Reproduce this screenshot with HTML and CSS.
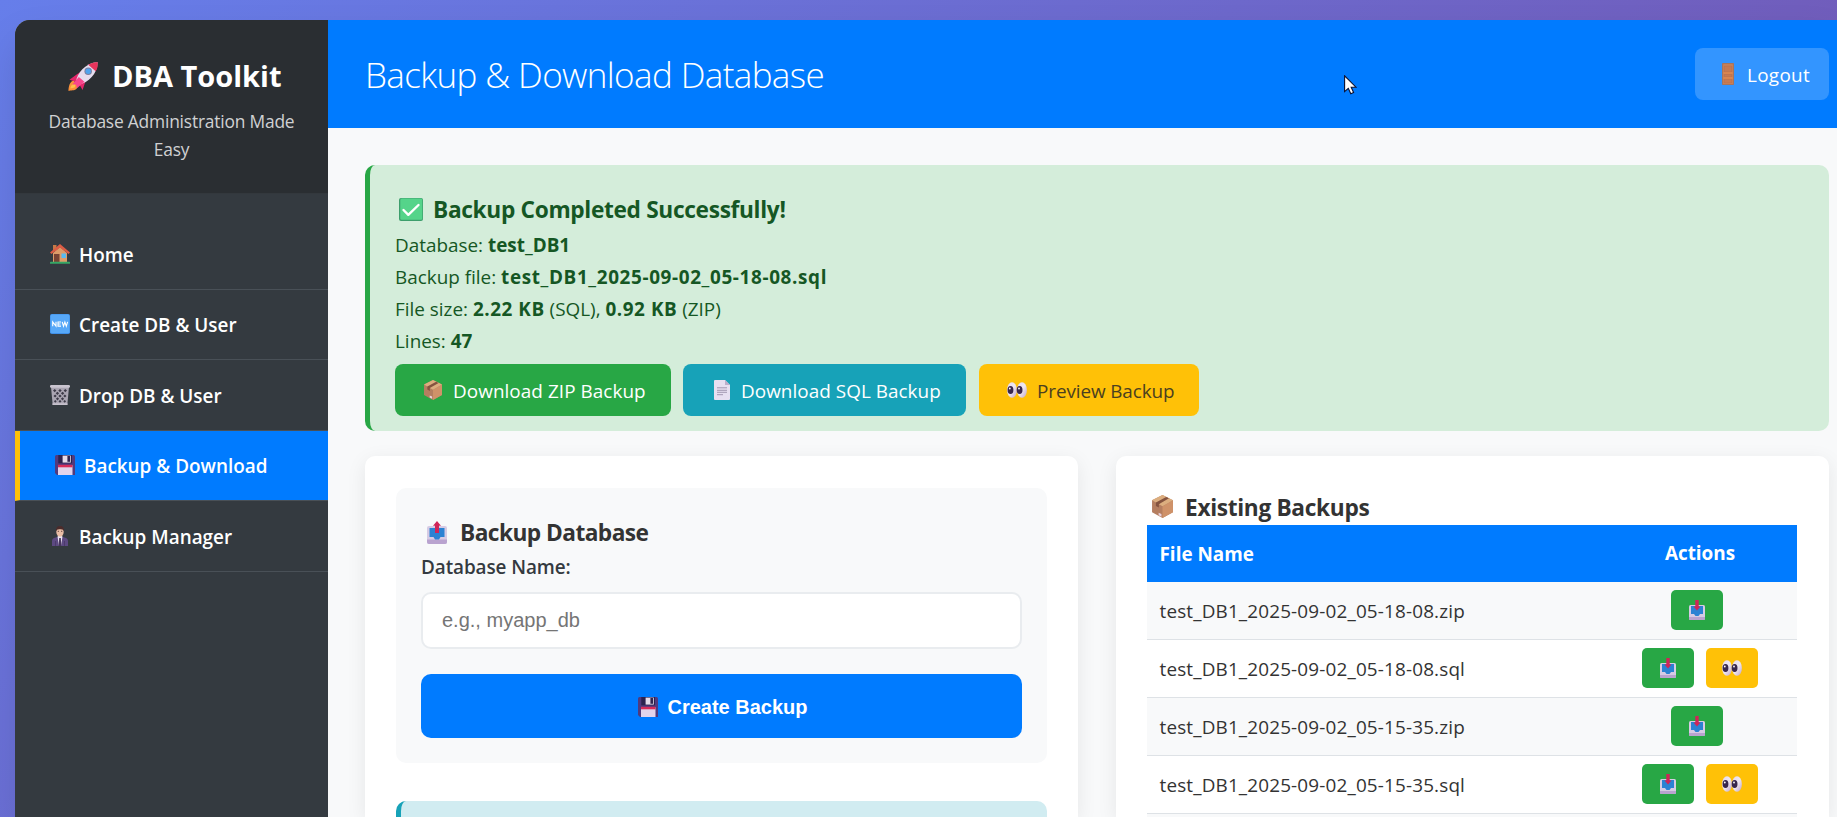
FILE: index.html
```html
<!DOCTYPE html>
<html lang="en">
<head>
<meta charset="utf-8">
<title>DBA Toolkit</title>
<link rel="stylesheet" href="styles.css">
</head>
<body>
<svg class="sprite" width="0" height="0" aria-hidden="true">
  <symbol id="rocket" viewBox="0 0 32 32">
    <path d="M5 21C8 22 11 25 9 29C7 32 2 31 0 32C0 28 1 22 5 21Z" fill="#f9913a"/>
    <path d="M2 29C3 25 5 24 7 25C8 28 6 29 2 29Z" fill="#fcc04a"/>
    <path d="M9 14L1 20L8 22L14 11ZM18 22L15 31L11 24L21 18Z" fill="#e3266a"/>
    <path d="M8 22C9 13 18 2 31 1C31 14 21 23 11 25Z" fill="#e5dcee"/>
    <path d="M21 4Q27 1 31 1Q32 6 29 11Z" fill="#e8345c"/>
    <path d="M11 17L4 25L8 25L9 29L17 22Z" fill="#f8458c"/>
    <circle cx="21" cy="11" r="4" fill="#7e7f9e"/><circle cx="21" cy="11" r="2.9" fill="#4fa3ee"/>
  </symbol>
  <symbol id="house" viewBox="0 0 20 20">
    <path d="M3 1H6.5V7H3Z" fill="#c87846"/><path d="M3 9L10 3L17 9V18H3Z" fill="#dd9c69"/>
    <path d="M4 10H9.5V18H4Z" fill="#794334"/><path d="M11.5 9.5H16V14H11.5Z" fill="#56baf2"/>
    <path d="M10 0L20 8.5L18.5 10L10 3.5L1.500 10L0 8.500Z" fill="#dc5c45"/>
    <rect y="17.800" width="20" height="2" rx=".6" fill="#36a765"/>
  </symbol>
  <symbol id="new" viewBox="0 0 20 20">
    <rect width="20" height="20" rx="1.800" fill="#3f8fe8"/><rect x=".6" y=".4" width="18.800" height="18.600" rx="1.500" fill="#57a8f8"/>
    <path d="M2.700 12.200V7.800L6 12.200V7.800M11 8H8V12.100H11M8 10H10.600M12.200 7.800L13.500 12.100L14.900 8L16.300 12.100L17.600 7.800" fill="none" stroke="#fff" stroke-width="1.100"/>
  </symbol>
  <symbol id="trash" viewBox="0 0 20 20">
    <path d="M1 2H19L17.300 20H2.700Z" fill="#aaa5b2"/>
    <path d="M3 5.500l1.700-1.500 1.700 1.500-1.700 1.700zM8.300 5.500L10 4l1.700 1.500L10 7.200zM13.600 5.500L15.300 4 17 5.500l-1.700 1.700zM5.700 8.200l1.700-1.500 1.700 1.500-1.700 1.700zM10.900 8.200l1.700-1.500 1.700 1.500-1.700 1.700zM3.500 11l1.600-1.500L6.700 11l-1.600 1.600zM8.300 11L10 9.500l1.700 1.500-1.700 1.600zM13.300 11l1.600-1.500 1.600 1.500-1.600 1.600zM5.900 13.800l1.600-1.500 1.600 1.500-1.600 1.600zM10.900 13.800l1.600-1.500 1.600 1.500-1.600 1.600zM3.900 16.300L5.300 15l1.400 1.300-1.400 1.500zM8.500 16.300L10 15l1.500 1.300-1.500 1.500zM13.300 16.300l1.400-1.300 1.400 1.300-1.400 1.500z" fill="#3e3b49"/>
    <rect y="0" width="20" height="2.800" rx="1.200" fill="#c9c4cf"/><rect x="2.500" y="18.300" width="15" height="1.700" fill="#c6c0cc"/>
  </symbol>
  <symbol id="floppy" viewBox="0 0 20 20">
    <path d="M1.500 0H18.500Q20 0 20 1.500V20H2L0 18V1.500Q0 0 1.500 0Z" fill="#513a7d"/>
    <path d="M3.300 0H17V8.300H3.300Z" fill="#2c224f"/><path d="M7.600 .6H15.800V7.600H7.600Z" fill="#e5dcea"/><path d="M12.400 1H15V6.800H12.400Z" fill="#30254f"/>
    <path d="M3 10.200H17.500V20H3Z" fill="#e2d4ec"/><path d="M3 9.800H17.500V12.300H3Z" fill="#d82c59"/>
  </symbol>
  <symbol id="manager" viewBox="0 0 16 20">
    <path d="M0 20V15Q0 12 3.500 11.500L8 10L12.500 11.500Q16 12 16 15V20Z" fill="#5c4982"/>
    <path d="M5.500 10.500L8 9L10.500 10.500L9 20H7Z" fill="#ebe4ef"/><path d="M7.200 12H8.800L9.400 20H6.600Z" fill="#47365d"/>
    <ellipse cx="8" cy="5.800" rx="3.700" ry="5" fill="#e9bda5"/>
    <path d="M3.900 5.500Q3.500 0 8 0Q12.500 0 12.100 5.500Q11.500 2.800 8 3.200Q4.500 2.800 3.900 5.500Z" fill="#4a2b2b"/>
    <path d="M5.700 5.300H7M9 5.300H10.300" stroke="#4a2b2b" stroke-width=".8"/>
    <path d="M3.500 15V20M12.500 15V20" stroke="#443362" stroke-width=".7"/>
  </symbol>
  <symbol id="door" viewBox="0 0 12 22">
    <rect width="12" height="22" rx=".8" fill="#a8745c"/><rect x="1.200" y="1.200" width="9.600" height="19.800" fill="#cc835a"/>
    <path d="M2.300 3H9.700V9H2.300ZM2.300 11.200H9.700V13.800H2.300ZM2.300 16H9.700V20H2.300Z" fill="#c67a52" stroke="#b86f4c" stroke-width=".6"/>
    <path d="M1.200 10H10.800M1.200 15H10.800" stroke="#e88c4b" stroke-width="1"/>
  </symbol>
  <symbol id="check" viewBox="0 0 24 23">
    <rect width="24" height="23" rx="2" fill="#3d9e6c"/><rect x="1.300" y=".5" width="22" height="21.300" rx="1.500" fill="#55d48a"/>
    <path d="M4.500 12L9.300 16.800L19.500 7" fill="none" stroke="#fff" stroke-width="2.400" stroke-linecap="round" stroke-linejoin="round"/>
  </symbol>
  <symbol id="box" viewBox="0 0 20 22">
    <path d="M10 0L20 5V16.500L10 22L0 16.500V5Z" fill="#b57e60"/>
    <path d="M10 11L20 5V16.500L10 22Z" fill="#cf9269"/><path d="M10 0L20 5L10 10.800L0 5Z" fill="#dcae7f"/>
    <path d="M3.700 7.200L13.500 1.800L16.200 3.200L6.500 8.800V12L3.700 10.500Z" fill="#85533f"/>
    <path d="M6.300 17L9 18.200V20.800L6.300 19.300Z" fill="#e9d2dc"/>
  </symbol>
  <symbol id="doc" viewBox="0 0 16 20">
    <path d="M.5 0H11L16 5V19Q16 20 15 20H1Q0 20 0 19V.8Z" fill="#e7dff1"/><path d="M11 0L16 5H11Z" fill="#bcaecb"/>
    <path d="M3 7.800H13M3 10.300H13M3 12.300H13" stroke="#9b90aa" stroke-width=".9"/><path d="M3 14.700H9" stroke="#9b90aa" stroke-width=".9"/>
  </symbol>
  <symbol id="eyes" viewBox="0 0 20 16">
    <defs><linearGradient id="eye" x2="1" y2="1"><stop stop-color="#e4d7f2"/><stop offset=".5" stop-color="#efe8f0"/><stop offset="1" stop-color="#bfa3ce"/></linearGradient></defs>
    <ellipse cx="5" cy="8" rx="4.900" ry="7.800" fill="url(#eye)"/><ellipse cx="15" cy="8" rx="4.900" ry="7.800" fill="url(#eye)"/>
    <ellipse cx="3.500" cy="8" rx="2.900" ry="4" fill="#38274c"/><ellipse cx="12.600" cy="8" rx="2.900" ry="4" fill="#38274c"/>
    <circle cx="2.800" cy="6.500" r=".9" fill="#fff"/><circle cx="12" cy="6.500" r=".9" fill="#fff"/>
  </symbol>
  <symbol id="outbox" viewBox="0 0 20 23">
    <rect y="5" width="20" height="18" rx="2" fill="#d6cbe4"/><path d="M0 18.500H20V21Q20 23 18 23H2Q0 23 0 21Z" fill="#b9a3cf"/>
    <path d="M2.500 7H17.500V16H13.500L12 18.500H8L6.500 16H2.500Z" fill="#2b82d3"/>
    <path d="M10 0L14 4.800H12V12H8V4.800H6Z" fill="#cf2558"/>
  </symbol>
  <symbol id="inbox" viewBox="0 0 16 20">
    <rect y="5" width="16" height="15" rx="1.500" fill="#d6cbe4"/><path d="M0 17H16V18.500Q16 20 14.500 20H1.500Q0 20 0 18.500Z" fill="#b9a3cf"/>
    <path d="M2 6H14V14H11L9.500 16H6.500L5 14H2Z" fill="#2b82d3"/>
    <path d="M6.300 0H9.700V6.500H11.500L8 10.500L4.500 6.500H6.300Z" fill="#cf2558"/>
  </symbol>
</svg>

<div class="container">
  <aside class="sidebar">
    <div class="brand">
      <div class="brand-title"><svg class="i-rocket"><use href="#rocket"/></svg><span>DBA Toolkit</span></div>
      <p class="brand-sub">Database Administration Made<br>Easy</p>
    </div>
    <nav class="nav">
      <a class="nav-item"><svg class="i-20"><use href="#house"/></svg><span>Home</span></a>
      <a class="nav-item"><svg class="i-20"><use href="#new"/></svg><span>Create DB &amp; User</span></a>
      <a class="nav-item"><svg class="i-20"><use href="#trash"/></svg><span>Drop DB &amp; User</span></a>
      <a class="nav-item active"><svg class="i-20"><use href="#floppy"/></svg><span>Backup &amp; Download</span></a>
      <a class="nav-item"><svg class="i-20"><use href="#manager"/></svg><span>Backup Manager</span></a>
    </nav>
  </aside>

  <main class="main">
    <header class="header">
      <h1 class="title">Backup &amp; Download Database</h1>
      <a class="logout"><svg class="i-door"><use href="#door"/></svg><span>Logout</span></a>
    </header>

    <div class="content">
      <section class="alert">
        <h3 class="heading"><svg class="i-check"><use href="#check"/></svg><span>Backup Completed Successfully!</span></h3>
        <div class="facts">
          <p>Database: <b>test_DB1</b></p>
          <p>Backup file: <b class="filename">test_DB1_2025-09-02_05-18-08.sql</b></p>
          <p>File size: <b class="size">2.22 KB</b> (SQL), <b class="size">0.92 KB</b> (ZIP)</p>
          <p>Lines: <b>47</b></p>
        </div>
        <div class="buttons">
          <a class="btn zip"><svg class="i-box"><use href="#box"/></svg><span>Download ZIP Backup</span></a>
          <a class="btn sql"><svg class="i-doc"><use href="#doc"/></svg><span>Download SQL Backup</span></a>
          <a class="btn preview"><svg class="i-eyes"><use href="#eyes"/></svg><span>Preview Backup</span></a>
        </div>
      </section>

      <div class="cards">
        <section class="card">
          <div class="form">
            <h3 class="heading form-heading"><svg class="i-outbox"><use href="#outbox"/></svg><span>Backup Database</span></h3>
            <label class="label" for="db">Database Name:</label>
            <input class="input" id="db" type="text" placeholder="e.g., myapp_db">
            <button class="submit"><svg class="i-20"><use href="#floppy"/></svg><span>Create Backup</span></button>
          </div>
          <div class="info"></div>
        </section>

        <section class="card">
          <h3 class="heading list-heading"><svg class="i-boxbig"><use href="#box"/></svg><span>Existing Backups</span></h3>
          <div class="table">
            <div class="row head"><span class="file">File Name</span><span class="actions">Actions</span></div>
            <div class="row odd"><span class="file">test_DB1_2025-09-02_05-18-08.zip</span><span class="actions single"><a class="act get"><svg class="i-inbox"><use href="#inbox"/></svg></a></span></div>
            <div class="row"><span class="file">test_DB1_2025-09-02_05-18-08.sql</span><span class="actions"><a class="act get"><svg class="i-inbox"><use href="#inbox"/></svg></a><a class="act view"><svg class="i-eyes"><use href="#eyes"/></svg></a></span></div>
            <div class="row odd"><span class="file">test_DB1_2025-09-02_05-15-35.zip</span><span class="actions single"><a class="act get"><svg class="i-inbox"><use href="#inbox"/></svg></a></span></div>
            <div class="row"><span class="file">test_DB1_2025-09-02_05-15-35.sql</span><span class="actions"><a class="act get"><svg class="i-inbox"><use href="#inbox"/></svg></a><a class="act view"><svg class="i-eyes"><use href="#eyes"/></svg></a></span></div>
            <div class="row odd last"></div>
          </div>
        </section>
      </div>
    </div>
  </main>
</div>

<svg class="cursor" viewBox="0 0 13 20"><path d="M.6 .8V16.600L4.300 13.300L6.800 18.800L9.600 17.500L7.200 12.200H12Z" fill="#fff" stroke="#0b1030" stroke-width="1.100"/></svg>
</body>
</html>
```

FILE: styles.css
```css
* { box-sizing: border-box; margin: 0; padding: 0; }

body {
  width: 1837px;
  height: 817px;
  overflow: hidden;
  padding: 20px 0 0 15px;
  background: linear-gradient(135deg, #667eea 0%, #764ba2 100%) 0 0 / 1857px 1020px no-repeat;
  font-family: "Open Sans", "Noto Sans", sans-serif;
  font-size: 18.9px;
  line-height: 32px;
  color: #333;
}

svg { display: block; flex: none; }
span { white-space: nowrap; }

.sprite { position: absolute; }
.cursor { position: absolute; left: 1344px; top: 75px; width: 13px; height: 20px; }

.i-20 { width: 20px; height: 20px; }
.i-rocket { width: 31px; height: 30px; }
.i-door { width: 12px; height: 22px; }
.i-check { width: 24px; height: 23px; }
.i-box { width: 18px; height: 20px; }
.i-boxbig { width: 21px; height: 23px; }
.i-doc { width: 16px; height: 20px; }
.i-eyes { width: 20px; height: 16px; }
.i-outbox { width: 20px; height: 23px; }
.i-inbox { width: 16px; height: 20px; }

.container {
  display: flex;
  height: 797px;
  border-radius: 15px 0 0 0;
  overflow: hidden;
  background: #fff;
  box-shadow: 0 20px 40px rgba(0, 0, 0, 0.1);
}

.sidebar { flex: none; width: 313px; background: #343a40; color: #fff; }

.brand {
  height: 174px;
  padding-top: 32px;
  background: #2a2e32;
  border-bottom: 1px solid #33383d;
  text-align: center;
}
.brand-title {
  display: flex;
  align-items: center;
  gap: 13px;
  height: 48px;
  padding-left: 53px;
  font-size: 29px;
  font-weight: 700;
}
.brand-sub { margin-top: 7px; font-size: 17.400px; line-height: 28px; letter-spacing: -0.2px; color: #d0d1d2; }

.nav { padding-top: 25px; }
.nav-item {
  display: flex;
  align-items: center;
  gap: 9px;
  height: 70.500px;
  padding-left: 35px;
  border-bottom: 1px solid #495057;
  font-weight: 600;
}
.nav-item span, .btn span, .logout span { padding-top: 1.500px; }
.nav-item.active { background: #007bff; border-left: 5px solid #ffc107; }

.main { flex: 1; background: #f8f9fa; }

.header {
  display: flex;
  align-items: center;
  justify-content: space-between;
  height: 108px;
  padding: 0 8px 0 37px;
  background: #007bff;
  color: #fff;
}
.title { padding-top: 2px; font-size: 35px; font-weight: 300; line-height: 58px; letter-spacing: -0.62px; }
.logout {
  display: flex;
  align-items: center;
  gap: 13px;
  width: 134px;
  height: 52px;
  padding-left: 27px;
  border-radius: 8px;
  background: rgba(255, 255, 255, 0.2);
  letter-spacing: 0.3px;
}

.content { padding: 37px 8px 0 37px; }

.heading { display: flex; align-items: center; height: 38px; font-size: 22.700px; font-weight: 700; letter-spacing: -0.33px; }
.heading span { padding-top: 2px; }

.alert {
  height: 266px;
  padding: 25px 25px 0;
  border-left: 5px solid #28a745;
  border-radius: 10px;
  background: #d4edda;
  color: #155724;
}
.alert .heading { gap: 10px; padding-left: 4px; }
.facts { padding-top: 0.500px; }
.facts p { white-space: nowrap; }
.filename { letter-spacing: 0.63px; }
.size { letter-spacing: 0.55px; }
.buttons { display: flex; margin-top: 7.500px; }
.btn { display: flex; align-items: center; height: 52px; border-radius: 8px; color: #fff; }
.zip { width: 276px; padding-left: 29px; gap: 11px; background: #28a745; letter-spacing: 0.06px; }
.sql { width: 283px; margin-left: 12px; padding-left: 31px; gap: 11px; background: #17a2b8; letter-spacing: 0.04px; }
.preview { width: 220px; margin-left: 13px; padding-left: 28px; gap: 10px; background: #ffc107; color: #4b3f20; letter-spacing: -0.1px; }

.cards { display: grid; grid-template-columns: 713px 713px; gap: 38px; margin-top: 25px; }
.card {
  height: 361px;
  padding: 32px 32px 0 31px;
  border-radius: 10px 10px 0 0;
  overflow: hidden;
  background: #fff;
  box-shadow: 0 5px 20px rgba(0, 0, 0, 0.08);
}

.form { width: 651px; height: 275px; padding: 25px 25px 0; border-radius: 10px; background: #f8f9fa; }
.form-heading { padding-left: 6px; gap: 13px; letter-spacing: -0.55px; }
.label { display: block; font-weight: 600; letter-spacing: -0.08px; color: #343a40; }
.input {
  display: block;
  width: 601px;
  height: 57px;
  margin-top: 9px;
  padding: 0 19px;
  border: 2px solid #e9ecef;
  border-radius: 10px;
  background: #fff;
  font: 20px "Liberation Sans", sans-serif;
}
.input::placeholder { color: #757575; opacity: 1; }
.submit {
  display: flex;
  align-items: center;
  justify-content: center;
  gap: 9px;
  width: 601px;
  height: 64px;
  margin-top: 25px;
  padding: 2px 0 0 3px;
  border: 0;
  border-radius: 10px;
  background: #007bff;
  color: #fff;
  font: bold 20px "Liberation Sans", sans-serif;
}
.info {
  width: 651px;
  height: 16px;
  margin-top: 38px;
  border-left: 5px solid #17a2b8;
  border-radius: 10px 10px 0 0;
  background: #d1ecf1;
}

.list-heading { height: 37px; padding-left: 5px; gap: 12px; letter-spacing: -0.33px; }
.row {
  display: flex;
  align-items: center;
  height: 58px;
  border-bottom: 1px solid #dee2e6;
  background: #fff;
}
.row.odd { background: #f8f9fa; }
.row.last { height: 3px; border-bottom: 0; }
.row.head { height: 57px; border-bottom: 0; background: #007bff; color: #fff; font-weight: 700; }
.file { flex: 1; padding-left: 12.500px; }
.odd .file, .row:not(.head) .file { letter-spacing: 0.16px; }
.actions { display: flex; justify-content: center; gap: 12px; width: 194px; padding-bottom: 1px; }
.actions.single { padding-right: 6px; }
.act { display: flex; align-items: center; justify-content: center; width: 52px; height: 40px; border-radius: 5px; }
.get { background: #28a745; }
.view { background: #ffc107; }
```
